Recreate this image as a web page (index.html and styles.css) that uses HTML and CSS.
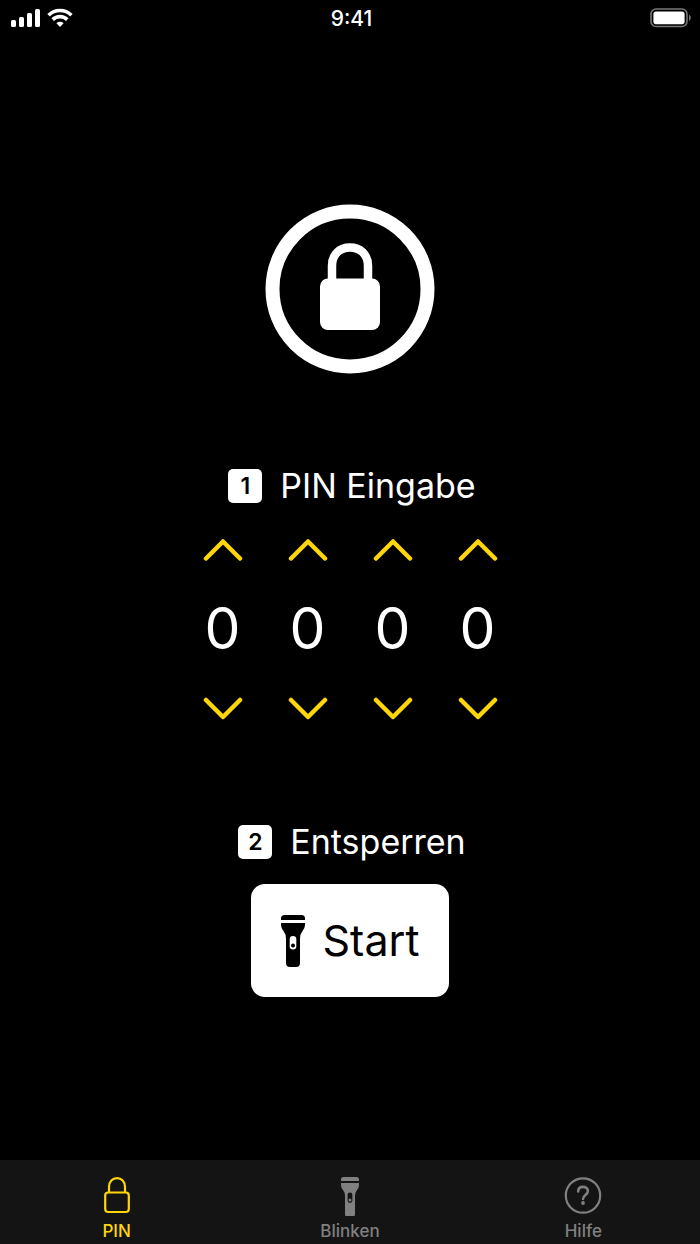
FILE: index.html
```html
<!DOCTYPE html>
<html lang="de">
<head>
    <meta charset="UTF-8">
    <meta name="viewport" content="width=device-width, initial-scale=1.0">
    <title>PIN Eingabe</title>
    <link rel="stylesheet" href="styles.css">
</head>
<body>
    <header class="status-bar">
        <div class="status-left">
            <svg width="30" height="18" viewBox="0 0 30 18" fill="#fff">
                <rect x="0" y="11" width="5" height="7" rx="1.5"/>
                <rect x="8" y="8" width="5" height="10" rx="1.5"/>
                <rect x="16" y="4" width="5" height="14" rx="1.5"/>
                <rect x="24" y="0" width="5" height="18" rx="1.5"/>
            </svg>
            <svg width="26" height="20" viewBox="0 0 26 20" fill="none" stroke="#fff" stroke-width="3.6">
                <path d="M1.6 7.2a16.3 16.3 0 0 1 22.8 0"/>
                <path d="M5.7 11.6a10.4 10.4 0 0 1 14.6 0"/>
                <path d="M13 19l-3.6-3.7a5.2 5.2 0 0 1 7.2 0z" fill="#fff" stroke="none"/>
            </svg>
        </div>
        <time class="clock">9:41</time>
        <div class="status-right">
            <svg width="42" height="20" viewBox="0 0 42 20">
                <rect x="1" y="1" width="36" height="17.5" rx="5" fill="none" stroke="#777" stroke-width="1.6"/>
                <rect x="3.4" y="3.4" width="31.2" height="12.8" rx="2.6" fill="#fff"/>
                <path d="M39 6.8c2.4 1 2.4 5 0 6z" fill="#777"/>
            </svg>
        </div>
    </header>

    <main class="content">
        <svg class="lock" width="170" height="170" viewBox="0 0 170 170" fill="none" stroke="#fff">
            <circle cx="85" cy="85" r="77.5" stroke-width="14"/>
            <path d="M67 78V62c0-12 8-18.500 18-18.500s18 6.500 18 18.500v16" stroke-width="8.500"/>
            <rect x="55" y="74.500" width="60" height="51.500" rx="8" fill="#fff" stroke="none"/>
        </svg>

        <h2 class="step"><span class="number">1</span>PIN Eingabe</h2>
        <div class="pin">
            <div class="digit">
                <button type="button" class="arrow up" aria-label="Ziffer 1 erhöhen"><svg width="40" height="24" viewBox="0 0 40 24"><path d="M3 21.500L20 4.500l17 17"/></svg></button>
                <output class="value">0</output>
                <button type="button" class="arrow down" aria-label="Ziffer 1 verringern"><svg width="40" height="24" viewBox="0 0 40 24"><path d="M3 3L20 20L37 3"/></svg></button>
            </div>
            <div class="digit">
                <button type="button" class="arrow up" aria-label="Ziffer 2 erhöhen"><svg width="40" height="24" viewBox="0 0 40 24"><path d="M3 21.500L20 4.500l17 17"/></svg></button>
                <output class="value">0</output>
                <button type="button" class="arrow down" aria-label="Ziffer 2 verringern"><svg width="40" height="24" viewBox="0 0 40 24"><path d="M3 3L20 20L37 3"/></svg></button>
            </div>
            <div class="digit">
                <button type="button" class="arrow up" aria-label="Ziffer 3 erhöhen"><svg width="40" height="24" viewBox="0 0 40 24"><path d="M3 21.500L20 4.500l17 17"/></svg></button>
                <output class="value">0</output>
                <button type="button" class="arrow down" aria-label="Ziffer 3 verringern"><svg width="40" height="24" viewBox="0 0 40 24"><path d="M3 3L20 20L37 3"/></svg></button>
            </div>
            <div class="digit">
                <button type="button" class="arrow up" aria-label="Ziffer 4 erhöhen"><svg width="40" height="24" viewBox="0 0 40 24"><path d="M3 21.500L20 4.500l17 17"/></svg></button>
                <output class="value">0</output>
                <button type="button" class="arrow down" aria-label="Ziffer 4 verringern"><svg width="40" height="24" viewBox="0 0 40 24"><path d="M3 3L20 20L37 3"/></svg></button>
            </div>
        </div>

        <h2 class="step"><span class="number">2</span>Entsperren</h2>
        <button type="button" class="start" id="start">
            <svg width="24" height="52" viewBox="0 0 24 52" fill="currentColor">
                <path d="M0 5V3.500Q0 0 3.500 0h17Q24 0 24 3.500V5z"/>
                <path d="M0 8h24v2q0 3-2.500 6t-2.500 8v24q0 4-4 4H9q-4 0-4-4V24q0-5-2.500-8T0 10z"/>
                <rect x="8.700" y="21" width="6.600" height="13.500" rx="3.300" fill="#fff"/>
                <circle cx="12" cy="30.500" r="2"/>
            </svg>
            Start
        </button>
    </main>

    <nav class="tab-bar">
        <a href="#pin" class="tab active" aria-current="page">
            <svg width="38" height="40" viewBox="0 0 38 40" fill="none" stroke="currentColor" stroke-width="2.200">
                <rect x="7.200" y="16.500" width="23.600" height="19.500" rx="3"/>
                <path d="M11 16.500V11c0-5.500 3.500-8.800 8-8.800s8 3.300 8 8.800v5.500"/>
            </svg>
            PIN
        </a>
        <a href="#blinken" class="tab">
            <svg width="38" height="40" viewBox="0 0 38 40" fill="currentColor">
                <path d="M10 5V3.500Q10 1 12.500 1h13Q28 1 28 3.500V5z"/>
                <path d="M10 7h18v2q0 2.500-2 5t-2 6v18q0 3-3 3h-4q-3 0-3-3V20q0-3.500-2-6t-2-5z"/>
                <rect x="16.600" y="16.500" width="4.800" height="10.500" rx="2.400" fill="#141414"/>
                <circle cx="19" cy="24" r="1.500"/>
            </svg>
            Blinken
        </a>
        <a href="#hilfe" class="tab">
            <svg width="38" height="40" viewBox="0 0 38 40" fill="none" stroke="currentColor" stroke-width="2.200">
                <circle cx="19" cy="19.500" r="17.200"/>
                <path d="M14.200 15.500c0-3 2-4.600 4.800-4.600s4.900 1.700 4.900 4.200c0 4-4.900 3.700-4.900 7.900" stroke-width="2.600" stroke-linecap="round"/>
                <circle cx="19" cy="27" r="1.900" fill="currentColor" stroke="none"/>
            </svg>
            Hilfe
        </a>
    </nav>

    <script>
        document.querySelectorAll('.digit').forEach(digit => {
            const value = digit.querySelector('.value');
            digit.querySelector('.up').addEventListener('click', () => {
                value.textContent = (Number(value.textContent) + 1) % 10;
            });
            digit.querySelector('.down').addEventListener('click', () => {
                value.textContent = (Number(value.textContent) + 9) % 10;
            });
        });
    </script>
</body>
</html>
```
FILE: styles.css
```css
* {
    box-sizing: border-box;
}
body {
    font-family: Inter, "Liberation Sans", sans-serif;
    background-color: #000;
    color: #fff;
    display: flex;
    flex-direction: column;
    min-height: 100vh;
    margin: 0;
}
svg {
    display: block;
    flex-shrink: 0;
}
button {
    border: none;
    padding: 0;
    font-family: inherit;
    cursor: pointer;
}
.status-bar {
    display: grid;
    grid-template-columns: 1fr auto 1fr;
    align-items: center;
    height: 36px;
    padding: 0 8px 0 11px;
}
.status-left {
    display: flex;
    align-items: center;
    gap: 6px;
}
.status-right {
    display: flex;
    justify-content: flex-end;
}
.clock {
    font-size: 21px;
    font-weight: 500;
}
.content {
    flex: 1;
    display: flex;
    flex-direction: column;
    align-items: center;
    padding: 168px 20px 40px;
}
.step {
    display: flex;
    align-items: center;
    gap: 18px;
    margin: 0;
    padding-left: 4px;
    font-size: 34px;
    font-weight: 400;
    line-height: 44px;
}
.number {
    width: 34px;
    height: 34px;
    border-radius: 5px;
    background-color: #fff;
    color: #000;
    font-size: 23px;
    font-weight: 600;
    line-height: 34px;
    text-align: center;
}
.lock {
    margin-bottom: 90px;
}
.pin {
    display: grid;
    grid-template-columns: repeat(4, 85px);
    margin: 21px 0 91px;
}
.digit {
    display: flex;
    flex-direction: column;
    align-items: center;
}
.arrow {
    display: flex;
    justify-content: center;
    align-items: center;
    width: 60px;
    height: 40px;
    background: none;
}
.arrow path {
    fill: none;
    stroke: #ffd60a;
    stroke-width: 4.5;
    stroke-linecap: round;
    stroke-linejoin: round;
}
.value {
    font-size: 57px;
    font-weight: 400;
    line-height: 120px;
}
.start {
    display: flex;
    justify-content: center;
    align-items: center;
    gap: 18px;
    margin-top: 20px;
    padding: 28px 30px;
    border-radius: 14px;
    background-color: #fff;
    color: #000;
    font-size: 43px;
    line-height: 57px;
}
.tab-bar {
    display: grid;
    grid-template-columns: repeat(3, 1fr);
    height: 84px;
    background-color: #141414;
}
.tab {
    display: flex;
    flex-direction: column;
    align-items: center;
    padding-top: 16px;
    color: #808080;
    font-size: 17px;
    font-weight: 500;
    line-height: 30px;
    text-decoration: none;
}
.tab.active {
    color: #ffd60a;
}
```
